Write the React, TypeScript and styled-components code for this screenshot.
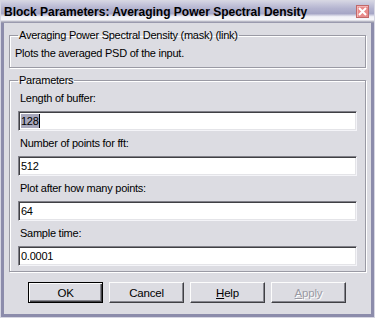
import styled, { createGlobalStyle, css } from "styled-components";

const GlobalStyle = createGlobalStyle`
    html, body {
        margin: 0;
        padding: 0;
        background: #dcdce2;
    }

    * {
        box-sizing: border-box;
    }
`;

const Window = styled.div`
    width: 375px;
    height: 318px;
    display: flex;
    flex-direction: column;
    background-color: #dcdce2;
    border: 1px solid #d6d6e2;
    box-shadow: inset 0 0 0 3px #8c8cab;
    font-family: "Liberation Sans", Arial, sans-serif;
    font-size: 11px;
    letter-spacing: -0.25px;
    color: #000;
    padding: 0 4px 4px 4px;
`;

const TitleBar = styled.div`
    height: 22px;
    margin: 0 -4px;
    padding: 0 5px 0 3px;
    display: flex;
    align-items: center;
    justify-content: space-between;
    background: linear-gradient(
        to bottom,
        #d4d4e2 0%,
        #b4b4d0 35%,
        #a6a6c6 60%,
        #f2f2f8 75%,
        #f6f6fa 90%,
        #a4a4b4 100%
    );
    border-bottom: 1px solid #9a9aae;

    h1 {
        margin: 0;
        font-size: 12px;
        font-weight: bold;
        letter-spacing: 0;
    }
`;

const CloseButton = styled.div`
    width: 13px;
    height: 13px;
    display: flex;
    align-items: center;
    justify-content: center;
    background-color: #e88a8a;
    border: 1px solid #c06868;
    box-shadow: inset 1px 1px 0 #f4b4b4;
`;

const Group = styled.fieldset<{ $tight?: boolean }>`
    margin: 5px 4px 0 4px;
    padding: 4px 10px ${({ $tight }) => ($tight ? "5px" : "7px")} 10px;
    border: 1px solid #9a9aa4;
    box-shadow: inset 1px 1px 0 #fff, 1px 1px 0 #fff;

    legend {
        padding: 0 1px;
        margin-left: -2px;
        line-height: 14px;
    }
`;

const Description = styled.p`
    margin: 0 0 0 -5px;
    line-height: 14px;
`;

const Field = styled.div`
    display: flex;
    flex-direction: column;
    gap: 6px;
    margin-bottom: 5px;

    &:last-child {
        margin-bottom: 0;
    }

    label {
        line-height: 14px;
    }
`;

const Input = styled.div`
    height: 20px;
    margin: 0 -2px;
    padding: 0 2px;
    display: flex;
    align-items: center;
    background-color: #fff;
    border-style: solid;
    border-width: 1px;
    border-color: #808088 #f4f4f8 #f4f4f8 #808088;
    box-shadow: inset 1px 1px 0 #404044, inset -1px -1px 0 #e4e4e8;
    line-height: 14px;
`;

const Selected = styled.span`
    background-color: #a8a8bc;
    border-right: 1px solid #000;
`;

const ButtonRow = styled.div`
    display: flex;
    justify-content: center;
    gap: 6px;
    margin-top: 10px;
    padding-right: 1px;
`;

const Button = styled.button<{ $default?: boolean; $disabled?: boolean }>`
    width: 75px;
    height: 21px;
    padding: 0;
    font-family: inherit;
    font-size: 11.5px;
    letter-spacing: -0.2px;
    background-color: #dcdce2;
    border: 1px solid;
    border-color: #fcfcfc #404044 #404044 #fcfcfc;
    box-shadow: inset -1px -1px 0 #86868e;
    color: #000;

    ${({ $default }) =>
        $default &&
        css`
            border-color: #000;
            box-shadow: inset 1px 1px 0 #fcfcfc, inset -1px -1px 0 #404044,
                inset -2px -2px 0 #86868e;
        `}

    ${({ $disabled }) =>
        $disabled &&
        css`
            color: #9a9aa4;
            text-shadow: 1px 1px 0 #fff;
        `}

    u {
        text-decoration: underline;
    }
`;

const fields = [
    { label: "Length of buffer:", value: "128", selected: true },
    { label: "Number of points for fft:", value: "512" },
    { label: "Plot after how many points:", value: "64" },
    { label: "Sample time:", value: "0.0001" },
];

export default function App() {
    return (
        <>
            <GlobalStyle />
            <Window>
                <TitleBar>
                    <h1>Block Parameters: Averaging Power Spectral Density</h1>
                    <CloseButton>
                        <svg width="9" height="9" viewBox="0 0 9 9">
                            <path d="M1 1L8 8M8 1L1 8" stroke="#fff" strokeWidth="2" />
                        </svg>
                    </CloseButton>
                </TitleBar>

                <Group>
                    <legend>Averaging Power Spectral Density (mask) (link)</legend>
                    <Description>Plots the averaged PSD of the input.</Description>
                </Group>

                <Group $tight>
                    <legend>Parameters</legend>
                    {fields.map((f) => (
                        <Field key={f.label}>
                            <label>{f.label}</label>
                            <Input>
                                {f.selected ? <Selected>{f.value}</Selected> : f.value}
                            </Input>
                        </Field>
                    ))}
                </Group>

                <ButtonRow>
                    <Button $default>OK</Button>
                    <Button>Cancel</Button>
                    <Button>
                        <u>H</u>elp
                    </Button>
                    <Button $disabled>
                        <u>A</u>pply
                    </Button>
                </ButtonRow>
            </Window>
        </>
    );
}
